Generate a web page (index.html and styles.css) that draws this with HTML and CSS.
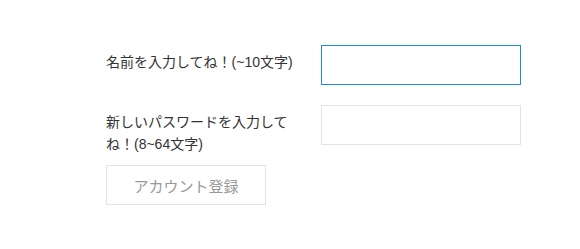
FILE: index.html
```html
<!DOCTYPE html>
<html lang="ja">
<head>
    <meta charset="UTF-8">
    <title>アカウント登録</title>
    <link rel="stylesheet" href="styles.css">
</head>
<body>

    <form class="signup">
        <div class="row">
            <label class="label" for="name">名前を入力してね！(~10文字)</label>
            <input class="field focused" id="name" type="text">
        </div>
        <div class="row">
            <label class="label" for="pass">新しいパスワードを入力してね！(8~64文字)</label>
            <input class="field" id="pass" type="password">
        </div>
        <button class="submit" type="button" disabled>アカウント登録</button>
    </form>

</body>
</html>
```

FILE: styles.css
```css
body {
    margin: 0;
    background: #fff;
    font-family: "Liberation Sans", "Noto Sans CJK JP", sans-serif;
    color: #333;
}

.signup {
    width: 415px;
    margin-left: 106px;
    padding-top: 45px;
}

.row {
    display: flex;
    align-items: flex-start;
    height: 40px;
    margin-bottom: 20px;
}

.label {
    width: 190px;
    margin-right: 25px;
    padding-top: 6px;
    font-size: 14px;
    line-height: 22px;
}

.field {
    box-sizing: border-box;
    width: 200px;
    height: 40px;
    margin: 0;
    border: 1px solid #e3e3e3;
    outline: none;
    background: #fff;
}
.focused { border-color: #1e88e5; }

.submit {
    box-sizing: border-box;
    width: 160px;
    height: 40px;
    border: 1px solid #e3e3e3;
    background: #fff;
    color: #999;
    font-family: inherit;
    font-size: 15px;
}
```
